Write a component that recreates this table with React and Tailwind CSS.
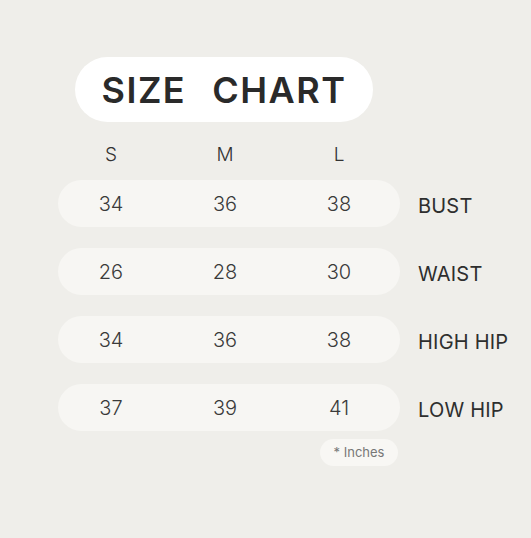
import React from "react";

const ROWS = [
  { label: "BUST", values: ["34", "36", "38"] },
  { label: "WAIST", values: ["26", "28", "30"] },
  { label: "HIGH HIP", values: ["34", "36", "38"] },
  { label: "LOW HIP", values: ["37", "39", "41"] },
];

const SIZES = ["S", "M", "L"];

const App = () => {
  return (
    <div
      className="w-[531px] h-[538px] bg-[#efeeea] pt-[57px] pl-[58px] text-[#333]"
      style={{ fontFamily: "Inter, 'Noto Sans', sans-serif" }}
    >
      {/* Title */}
      <div className="ml-[17px] w-[298px] h-[65px] rounded-full bg-white flex items-center justify-center gap-[26px] text-[36px] font-semibold tracking-[1.5px] text-[#2a2a2a]">
        <span>SIZE</span>
        <span>CHART</span>
      </div>

      {/* Size headers */}
      <div className="mt-[20px] flex pl-[3px] gap-[14px] text-[19px] font-light text-[#333]">
        {SIZES.map((s) => (
          <div key={s} className="w-[100px] text-center leading-[26px]">
            {s}
          </div>
        ))}
      </div>

      {/* Rows */}
      <div className="mt-[12px] flex flex-col gap-[21px]">
        {ROWS.map((row) => (
          <div key={row.label} className="flex items-center gap-[18px]">
            <div className="w-[342px] h-[47px] rounded-full bg-[#f7f6f3] flex items-center pl-[3px] gap-[14px] text-[20px] font-light text-[#3a3a3a]">
              {row.values.map((v, i) => (
                <div key={i} className="w-[100px] text-center">
                  {v}
                </div>
              ))}
            </div>
            <div className="pt-[4px] text-[20px] font-normal text-[#2e2e2e] tracking-[0.2px]">
              {row.label}
            </div>
          </div>
        ))}
      </div>

      {/* Unit note */}
      <div className="mt-[8px] ml-[262px] w-[78px] h-[27px] rounded-full bg-[#f8f7f4] flex items-center justify-center text-[13px] text-[#777]">
        * Inches
      </div>
    </div>
  );
};

export default App;
